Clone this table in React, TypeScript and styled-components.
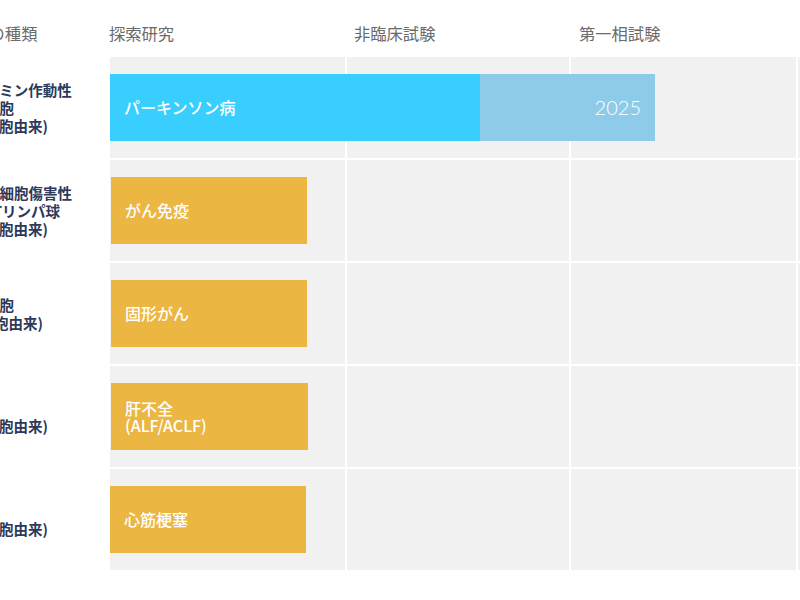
import React from "react";
import styled, { createGlobalStyle } from "styled-components";

const GlobalStyle = createGlobalStyle`
  html, body {
    margin: 0;
    padding: 0;
    background: #ffffff;
    overflow: hidden;
  }
  body {
    font-family: Lato, "Noto Sans CJK JP", sans-serif;
  }
`;

const COLS = "235px 222px 225px 100px";

const Page = styled.div`
  display: grid;
  grid-template-columns: 154px auto;
  margin-left: -44px;
  width: 940px;
`;

const Header = styled.div`
  display: contents;
`;

const HeaderLabel = styled.div`
  height: 57px;
  box-sizing: border-box;
  padding-top: 9px;
  display: flex;
  align-items: center;
  font-size: 16.3px;
  color: #6a6a6a;
  font-family: Lato, "Noto Sans CJK JP", sans-serif;
  white-space: nowrap;
`;

const PhaseHeader = styled.div`
  display: grid;
  grid-template-columns: ${COLS};
  column-gap: 2px;
  margin-left: -1px;
`;

const PhaseTitle = styled(HeaderLabel)<{ $inset: number }>`
  padding-left: ${(p) => p.$inset}px;
`;

const LabelCell = styled.div`
  height: 101px;
  display: flex;
  flex-direction: column;
  justify-content: center;
  font-family: "Noto Sans CJK JP", sans-serif;
  font-weight: 700;
  font-size: 14.5px;
  line-height: 18px;
  color: #2e3858;
  white-space: nowrap;
  margin-bottom: 2px;
`;

const Track = styled.div`
  display: grid;
  grid-template-columns: ${COLS};
  column-gap: 2px;
  height: 101px;
  margin-bottom: 2px;
`;

const Cell = styled.div<{ $col: number }>`
  grid-row: 1;
  grid-column: ${(p) => p.$col};
  background: #f1f1f1;
`;

const Bar = styled.div`
  grid-row: 1;
  grid-column: 1 / -1;
  align-self: center;
  justify-self: start;
  display: flex;
  height: 67px;
  position: relative;
  z-index: 1;
`;

const Segment = styled.div<{ $tone: "cyan" | "sky" | "amber" }>`
  display: flex;
  align-items: center;
  justify-content: ${(p) => (p.$tone === "sky" ? "flex-end" : "flex-start")};
  box-sizing: border-box;
  padding: 0 14px;
  background: ${(p) =>
    p.$tone === "cyan" ? "#38cfff" : p.$tone === "sky" ? "#8ecbe9" : "#ecb642"};
  color: #ffffff;
  font-family: "Noto Sans CJK JP", sans-serif;
  font-weight: 500;
  font-size: 16px;
  line-height: 17px;
`;

const Year = styled.span`
  font-family: Lato, sans-serif;
  font-weight: 300;
  font-size: 20px;
  color: #ffffff;
`;

interface IRow {
  label: string[];
  name: string[];
  tone: "cyan" | "amber";
  width: number;
  offset: number;
  year?: { text: string; width: number };
}

const rows: IRow[] = [
  {
    label: ["ドーパミン作動性", "神経細胞", "(iPS細胞由来)"],
    name: ["パーキンソン病"],
    tone: "cyan",
    width: 370,
    offset: 0,
    year: { text: "2025", width: 175 },
  },
  {
    label: ["抗腫瘍細胞傷害性", "CD8+Tリンパ球", "(iPS細胞由来)"],
    name: ["がん免疫"],
    tone: "amber",
    width: 196,
    offset: 1,
  },
  {
    label: ["樹状細胞", "(ES細胞由来)"],
    name: ["固形がん"],
    tone: "amber",
    width: 196,
    offset: 1,
  },
  {
    label: ["肝細胞", "(iPS細胞由来)"],
    name: ["肝不全", "(ALF/ACLF)"],
    tone: "amber",
    width: 197,
    offset: 1,
  },
  {
    label: ["心筋", "(iPS細胞由来)"],
    name: ["心筋梗塞"],
    tone: "amber",
    width: 196,
    offset: 0,
  },
];

const phases = [
  { title: "探索研究", inset: 0 },
  { title: "非臨床試験", inset: 8 },
  { title: "第一相試験", inset: 9 },
  { title: "", inset: 0 },
];

const App: React.FC = () => {
  return (
    <>
      <GlobalStyle />
      <Page>
        <Header>
          <HeaderLabel>細胞の種類</HeaderLabel>
          <PhaseHeader>
            {phases.map((p, i) => (
              <PhaseTitle key={i} $inset={p.inset}>
                {p.title}
              </PhaseTitle>
            ))}
          </PhaseHeader>
        </Header>
        {rows.map((row, index) => (
          <React.Fragment key={index}>
            <LabelCell>
              {row.label.map((line) => (
                <div key={line}>{line}</div>
              ))}
            </LabelCell>
            <Track>
              {[1, 2, 3, 4].map((c) => (
                <Cell key={c} $col={c} />
              ))}
              <Bar style={{ marginLeft: row.offset }}>
                <Segment $tone={row.tone} style={{ width: row.width }}>
                  <div>
                    {row.name.map((line) => (
                      <div key={line}>{line}</div>
                    ))}
                  </div>
                </Segment>
                {row.year && (
                  <Segment $tone="sky" style={{ width: row.year.width }}>
                    <Year>{row.year.text}</Year>
                  </Segment>
                )}
              </Bar>
            </Track>
          </React.Fragment>
        ))}
      </Page>
    </>
  );
};

export default App;
